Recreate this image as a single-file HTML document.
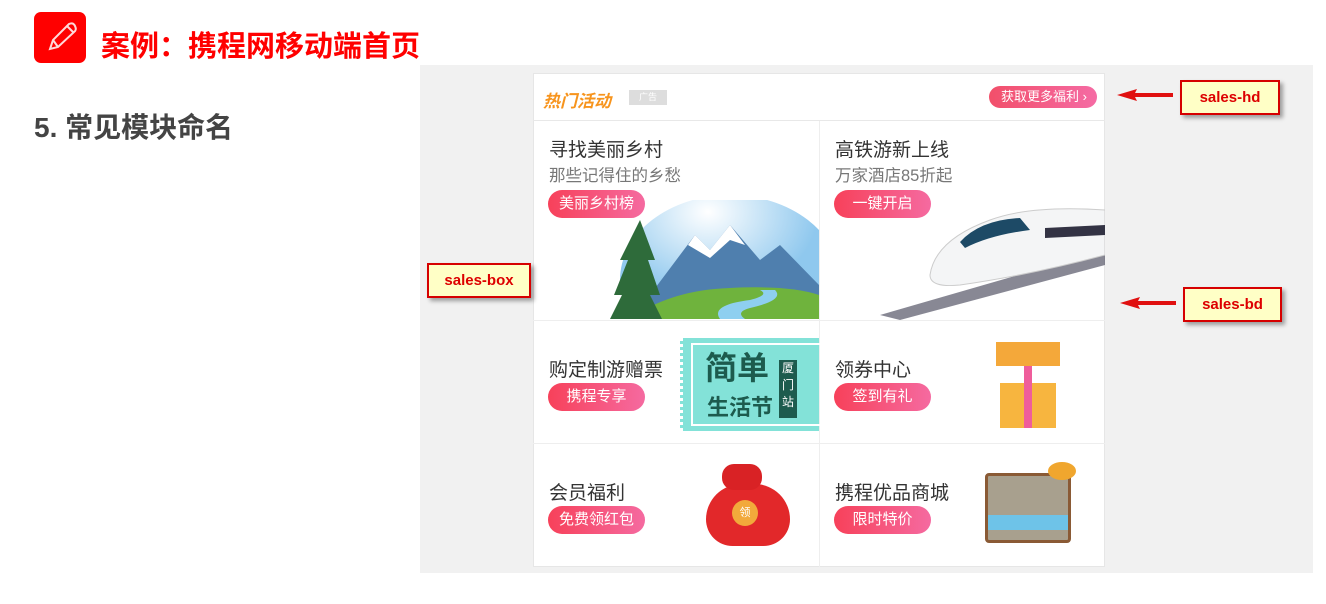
<!DOCTYPE html>
<html><head><meta charset="utf-8">
<style>
*{margin:0;padding:0;box-sizing:border-box}
body{width:1326px;height:604px;background:#fff;position:relative;overflow:hidden;font-family:"Liberation Sans","Noto Sans CJK SC",sans-serif}
.abs{position:absolute}
.icon{left:34px;top:12px;width:52px;height:51px;background:#f00;border-radius:7px}
.title{left:101px;top:23px;font-size:29px;font-weight:bold;color:#f00;white-space:nowrap}
.h5{left:34px;top:106px;font-size:28px;font-weight:bold;color:#444;white-space:nowrap}
.panel{left:420px;top:65px;width:893px;height:508px;background:#f1f1f1}
.card{left:533px;top:73px;width:572px;height:494px;background:#fff;border:1px solid #e6e6e6}
.hd{left:533px;top:73px;width:572px;height:48px;border-bottom:1px solid #e8e8e8}
.hot{left:543px;top:87px;font-size:17px;font-weight:bold;font-style:italic;color:#f7941d}
.ad{left:629px;top:90px;width:38px;height:15px;background:#ddd;color:#fff;font-size:9px;text-align:center;line-height:15px}
.more{left:989px;top:86px;width:108px;height:22px;border-radius:11px;background:linear-gradient(90deg,#f24f6a,#f56ba4);color:#fff;font-size:13px;line-height:22px;padding-left:12px}
.vl{left:819px;top:121px;width:1px;height:446px;background:#eee}
.hl{left:533px;height:1px;width:572px;background:#eee}
.t1{font-size:19px;color:#333;white-space:nowrap}
.t2{font-size:16.5px;color:#777;white-space:nowrap}
.btn{width:97px;height:28px;border-radius:14px;background:linear-gradient(90deg,#f7415a,#f56aa0);color:#fff;font-size:15px;text-align:center;line-height:28px}
.lab{background:#ffffc6;border:2px solid #d60000;color:#d00;font-weight:bold;font-size:15px;text-align:center;box-shadow:3px 3px 4px rgba(0,0,0,.35)}
</style></head><body>
<div class="abs icon"><svg width="52" height="51" viewBox="0 0 52 51"><g fill="none" stroke="#fff" stroke-width="2" opacity=".85"><path d="M16 37 L19 28 L35 12 Q39 10 41 14 Q43 18 40 20 L24 35 Z"/><path d="M19 28 L24 35"/><path d="M33 14 L39 20"/></g></svg></div>
<div class="abs title">案例：携程网移动端首页</div>
<div class="abs h5">5. 常见模块命名</div>
<div class="abs panel"></div>
<div class="abs card"></div>
<div class="abs hd"></div>
<div class="abs hot">热门活动</div>
<div class="abs ad">广告</div>
<div class="abs more">获取更多福利 ›</div>
<div class="abs vl"></div>
<div class="abs hl" style="top:320px"></div>
<div class="abs hl" style="top:443px"></div>

<div class="abs t1" style="left:549px;top:135px">寻找美丽乡村</div>
<div class="abs t2" style="left:549px;top:162px">那些记得住的乡愁</div>
<div class="abs btn" style="left:548px;top:190px">美丽乡村榜</div>
<div class="abs" style="left:610px;top:200px;width:209px;height:119px;overflow:hidden">
<svg width="209" height="119"><defs><radialGradient id="sk" cx=".4" cy=".1"><stop offset="0" stop-color="#fff"/><stop offset="1" stop-color="#8fc8ee"/></radialGradient></defs>
<ellipse cx="120" cy="80" rx="110" ry="85" fill="url(#sk)"/>
<path d="M40 95 L85 35 L100 50 L120 25 L150 60 L170 45 L209 85 L209 119 L40 119Z" fill="#4f7fae"/>
<path d="M78 45 L85 35 L100 50 L120 25 L135 45 L120 40 L100 58Z" fill="#fff"/>
<path d="M20 119 Q60 90 120 88 Q180 85 209 95 L209 119Z" fill="#6fb33d"/>
<path d="M110 119 Q100 105 140 100 Q160 95 150 90 L165 90 Q175 100 140 108 Q125 112 135 119Z" fill="#8ecff0"/>
<path d="M30 20 L45 60 L38 60 L50 95 L40 95 L52 119 L0 119 L12 95 L4 95 L18 60 L10 60Z" fill="#2e6b3a"/>
</svg></div>

<div class="abs t1" style="left:835px;top:135px">高铁游新上线</div>
<div class="abs t2" style="left:835px;top:162px">万家酒店85折起</div>
<div class="abs btn" style="left:834px;top:190px">一键开启</div>
<div class="abs" style="left:880px;top:180px;width:225px;height:140px;overflow:hidden">
<svg width="225" height="140"><path d="M0 135 L225 70 L225 85 L20 140Z" fill="#556" opacity=".7"/>
<path d="M50 95 Q55 60 110 40 Q150 25 225 30 L225 75 Q150 95 80 105 Q50 108 50 95Z" fill="#f4f5f6" stroke="#ccc"/>
<path d="M80 62 Q100 40 140 38 L150 50 Q110 55 85 68Z" fill="#1d4a66"/>
<path d="M165 48 L225 45 L225 55 L165 58Z" fill="#334"/></svg></div>

<div class="abs t1" style="left:549px;top:355px">购定制游赠票</div>
<div class="abs btn" style="left:548px;top:383px">携程专享</div>
<div class="abs" style="left:680px;top:338px;width:139px;height:93px;background:#83e2d8;border-left:3px dotted #fff"><div style="position:absolute;left:8px;top:5px;width:131px;height:83px;border:2px solid #fff;border-right:none"></div>
<div style="position:absolute;left:22px;top:12px;font-size:32px;font-weight:bold;color:#1d5b4e;line-height:36px">简单</div>
<div style="position:absolute;left:24px;top:52px;font-size:22px;font-weight:bold;color:#1d5b4e">生活节</div>
<div style="position:absolute;left:96px;top:22px;width:18px;height:58px;background:#1d5b4e;color:#fff;font-size:12px;line-height:17px;text-align:center">厦门站</div></div>

<div class="abs t1" style="left:835px;top:355px">领券中心</div>
<div class="abs btn" style="left:834px;top:383px">签到有礼</div>
<div class="abs" style="left:1000px;top:383px;width:56px;height:45px;background:#f7b53f"></div>
<div class="abs" style="left:996px;top:342px;width:64px;height:24px;background:#f4a83a"></div>
<div class="abs" style="left:1024px;top:366px;width:8px;height:62px;background:#ef5d9b"></div>

<div class="abs t1" style="left:549px;top:478px">会员福利</div>
<div class="abs btn" style="left:548px;top:506px">免费领红包</div>
<div class="abs" style="left:706px;top:484px;width:84px;height:62px;border-radius:40px 40px 30px 30px;background:#e2282a"></div>
<div class="abs" style="left:722px;top:464px;width:40px;height:26px;border-radius:12px;background:#d92225"></div>
<div class="abs" style="left:732px;top:500px;width:26px;height:26px;border-radius:50%;background:#f2a93b;color:#fff;font-size:11px;text-align:center;line-height:26px">领</div>

<div class="abs t1" style="left:835px;top:478px">携程优品商城</div>
<div class="abs btn" style="left:834px;top:506px">限时特价</div>
<div class="abs" style="left:985px;top:473px;width:86px;height:70px;background:#a8a08e;border:3px solid #8a5a35;border-radius:4px"></div>
<div class="abs" style="left:988px;top:515px;width:80px;height:15px;background:#6ec3e8"></div>
<div class="abs" style="left:1048px;top:462px;width:28px;height:18px;border-radius:50%;background:#f0a62e"></div>

<svg class="abs" style="left:1115px;top:88px" width="60" height="14"><path d="M2 7 L22 1 L20 5 L58 5 L58 9 L20 9 L22 13Z" fill="#e01010"/></svg>
<div class="abs lab" style="left:1180px;top:80px;width:100px;height:35px;line-height:31px">sales-hd</div>
<svg class="abs" style="left:1118px;top:296px" width="60" height="14"><path d="M2 7 L22 1 L20 5 L58 5 L58 9 L20 9 L22 13Z" fill="#e01010"/></svg>
<div class="abs lab" style="left:1183px;top:287px;width:99px;height:35px;line-height:31px">sales-bd</div>
<div class="abs lab" style="left:427px;top:263px;width:104px;height:35px;line-height:31px">sales-box</div>
</body></html>
